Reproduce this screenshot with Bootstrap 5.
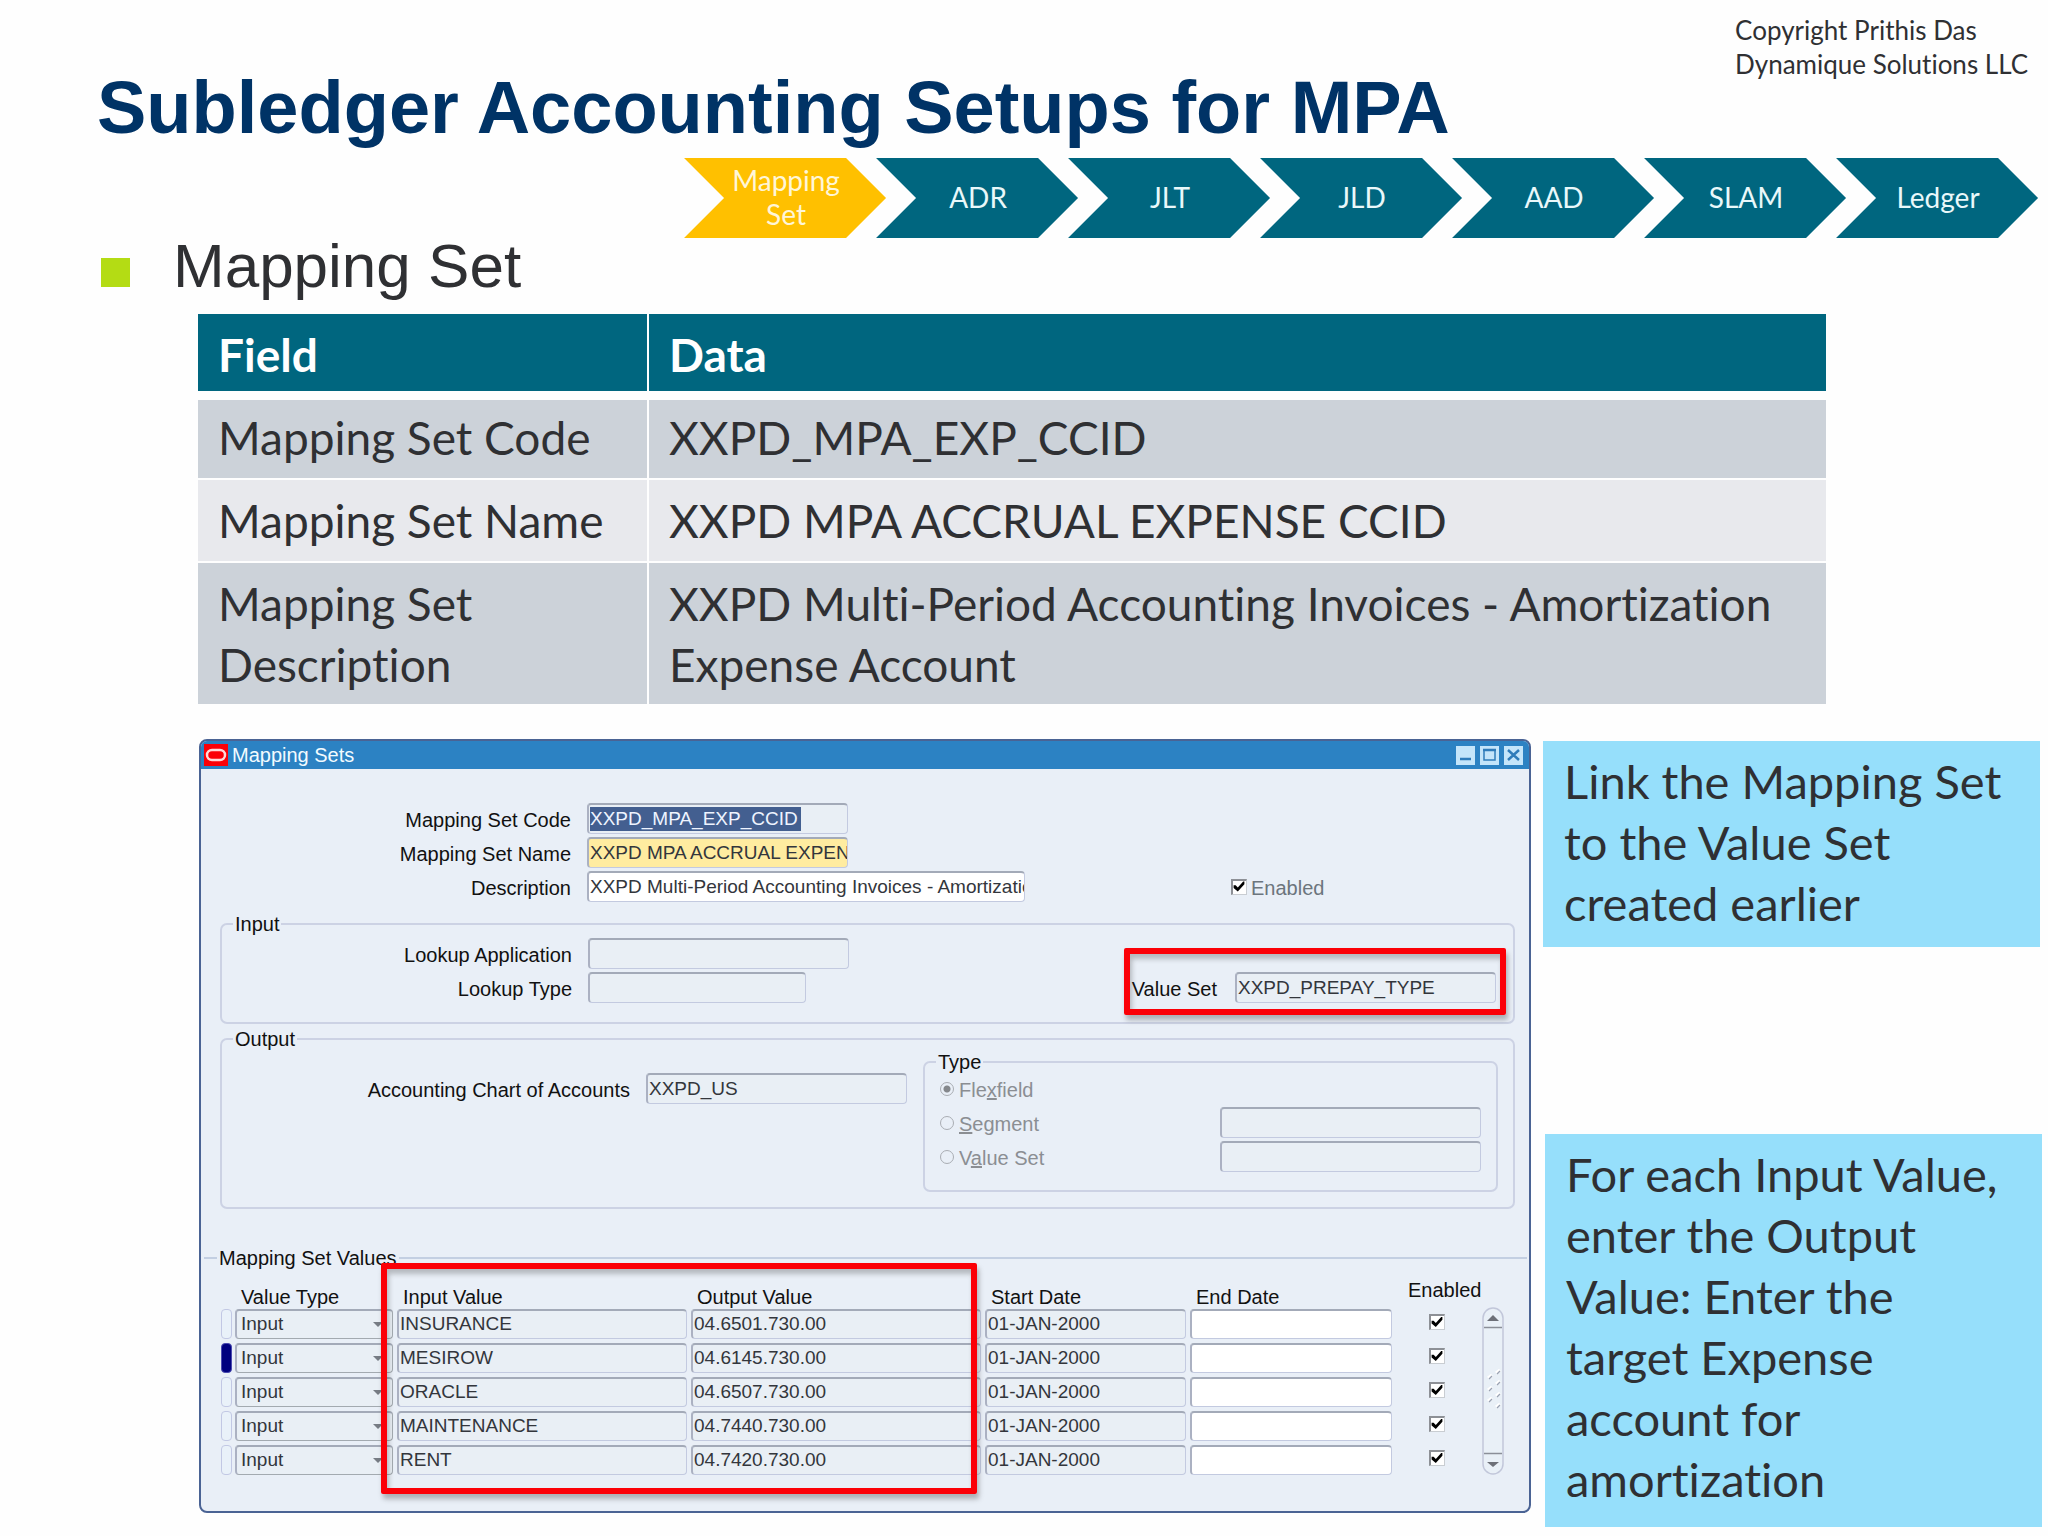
<!DOCTYPE html>
<html lang="en">
<head>
<meta charset="utf-8">
<meta name="viewport" content="width=device-width, initial-scale=1">
<title>Subledger Accounting Setups for MPA</title>
<link href="https://cdn.jsdelivr.net/npm/bootstrap@5.3.0/dist/css/bootstrap.min.css" rel="stylesheet">
<style>
  :root { --teal: #00667f; --ink: #2f3033; --pane: #e9eff7; }
  body { font-family: Lato, "Open Sans", sans-serif; font-variant-ligatures: none; color: var(--ink); background: #fefefe; }

  .slide-head { padding: 13px 20px 0 97px; }
  .slide-title { font: 700 74px/80px "Liberation Sans", Arial, sans-serif; color: #003366; margin: 55px 0 10px; }
  .credit { font-size: 26px; line-height: 34px; }

  .steps { width: 66.6%; padding-right: 20px; }
  .step { flex: 1 1 0; height: 80px; margin-right: -10px; padding: 0 0 2px 2px; background: var(--teal); color: #e9f8fa; font-size: 28px; line-height: 34px;
    clip-path: polygon(0 0, calc(100% - 40px) 0, 100% 50%, calc(100% - 40px) 100%, 0 100%, 40px 50%); }
  .step.current { background: #ffc000; color: #fff6d8; }

  .topic { font: 400 62px/56px "Liberation Sans", Arial, sans-serif; margin: 0 0 20px; padding-left: 101px; }
  .topic::before { content: ""; width: 29px; height: 29px; margin: 12px 43px 0 0; background: #b4dc14; }

  .spec-wrap { margin: 0 222px 35px 198px; }
  .spec { font-size: 46px; line-height: 61px; border-collapse: separate; border-spacing: 0; table-layout: fixed; margin: 0; color: var(--ink); }
  .spec th, .spec td { padding: 10px 20px; border: 0 solid #fefefe; border-bottom-width: 2px; text-align: left; }
  .spec th:first-child, .spec td:first-child { width: 451px; border-right-width: 2px; }
  .spec thead th { background: var(--teal); color: #fff; padding-bottom: 6px; border-bottom-width: 9px; }
  .spec tbody tr:first-child > * { padding-top: 7px; }
  .spec tbody tr > * { background: #ccd2d9; font-weight: 400; }
  .spec tbody tr:nth-child(2) > * { background: #e8e9ed; }
  .spec tbody tr:last-child > * { border-bottom-width: 0; padding-bottom: 9px; }

  .stage { padding: 0 6px 0 199px; gap: 12px; }
  .side { width: 499px; padding-top: 2px; }
  .note { background: #96dffb; font-size: 47px; line-height: 61px; padding: 10px 32px 13px 21px; margin: 0 2px 0 0; }
  .note + .note { margin: 187px 0 0 2px; padding-bottom: 17px; }

  .win { border: 2px solid #4a6394; border-radius: 8px; background: var(--pane); font: 400 20px/22px "Liberation Sans", Arial, sans-serif; color: #111; overflow: hidden; }
  .win-bar { background: #2c82c3; color: #f2fbff; height: 28px; padding: 0 6px 0 3px; }
  .win-bar button { width: 19px; height: 19px; padding: 0; border: 0; margin-left: 5px; background: #c4e5fa; display: flex; }
  .win-body { padding: 34px 0 32px; }

  .line { display: flex; align-items: center; height: 31px; margin-bottom: 3px; }
  .line > label:first-child { flex: none; text-align: right; margin-right: 16px; }
  .main-form .line > label:first-child { width: 370px; }
  .in-form .line > label:first-child { width: 350px; }
  .out-form .chart > label:first-child { width: 408px; }
  .line label { padding-top: 3px; }

  .fld { height: 31px; border: 1px solid #c3cae0; border-top: 2px solid #a3aab8; border-left: 2px solid #abb1c2; border-radius: 4px; background: #e9eff5; color: #33363c; padding: 0 0 0 1px; font-size: 19px; line-height: 22px; font-family: inherit; display: block; }
  .w-code { width: 261px; } .w-desc { width: 438px; } .w-type { width: 218px; }
  .fld.white { background: #fff; } .fld.need { background: #ffeca0; }
  .pick { padding: 2px 1px; }
  .pick input { width: 211px; height: 24px; border: 0; padding: 0; background: #435f90; color: #eef4ff; font: inherit; display: block; }
  .flag { width: 298px; }

  .grp { border: 2px solid #ccd2e4; border-radius: 7px; margin: 0 14px 4px 19px; padding: 3px 17px 16px 0; min-width: 0; }
  .grp > legend { float: none; width: auto; font-size: 20px; line-height: 22px; margin: 0 0 0 11px; padding: 0 2px; }
  .in-form { margin-top: 11px; }
  .out-form { padding: 1px 15px 15px 0; margin-bottom: 38px; }
  .chart { margin: 22px 0 0; }
  .kind { width: 575px; margin: 0; padding: 0 15px 15px 11px; color: #8b8e93; }
  .kind > legend { color: #111; margin-left: 0; }
  .rad { appearance: none; width: 14px; height: 14px; margin: 0 5px 0 4px; border: 1px solid #a9adb3; border-radius: 50%; }
  .rad:checked { background: radial-gradient(circle, #85888c 0 3px, transparent 4px); }

  .tick { appearance: none; display: block; width: 16px; height: 16px; margin: 0; background: #fff; border: 1px solid #c9cdd2; border-top: 2px solid #8d9096; border-left: 2px solid #8d9096; }
  .tick:checked::before { content: ""; display: block; width: 12px; height: 12px; background: #000; clip-path: polygon(5% 40%, 22% 40%, 40% 58%, 85% 8%, 95% 8%, 95% 32%, 40% 92%, 5% 62%); }

  .vals { border: 0; border-top: 2px solid #c3cfe2; margin: 0 2px 0 3px; padding: 0 23px 0 17px; min-width: 0; }
  .vals > legend { float: none; width: auto; font-size: 20px; line-height: 22px; margin: 0 0 0 -4px; padding: 0 2px; }
  .vgrid { table-layout: fixed; width: 100%; border-collapse: separate; border-spacing: 0; }
  .vgrid th { height: 40px; font-weight: 400; padding: 0 0 1px 6px; vertical-align: bottom; }
  .vgrid th.en { padding: 0 0 8px 12px; }
  .vgrid td { height: 34px; padding: 0 4px 4px 0; position: relative; vertical-align: top; }
  .vgrid .fld { width: 100%; height: 30px; padding-bottom: 1px; }
  .vgrid select.fld { appearance: none; padding-left: 4px; border-bottom-color: #a3aab0; border-right-color: #a3aab0; opacity: 1; }
  .drop::after { content: ""; position: absolute; right: 14px; top: 13px; border: 5px solid transparent; border-top-color: #777c84; border-bottom: 0; }
  .vgrid .tick { margin: 5px auto 0; }
  .grip { height: 30px; width: 11px; border: 1px solid #c2c8e4; border-radius: 4px; background: #e9f1f9; }
  .grip.on { background: #00007f; border-color: #4a4ab0; }
  .scroll { flex: none; width: 22px; height: 168px; margin-top: 38px; }

  .redbox { position: absolute; border: 6px solid #fb0007; border-radius: 2px; box-shadow: 2px 5px 5px rgba(60,60,60,.35), inset 2px 5px 5px rgba(60,60,60,.3); pointer-events: none; }
  .vset .redbox { inset: -24px -10px -12px -8px; }
  .vset label { margin-right: 18px; }
  .vals .redbox { left: 160px; top: -6px; width: 596px; height: 231px; }
</style>
<script src="https://cdn.jsdelivr.net/npm/bootstrap@5.3.0/dist/js/bootstrap.bundle.min.js"></script>
</head>
<body>
<header class="slide-head d-flex justify-content-between align-items-start">
  <h1 class="slide-title">Subledger Accounting Setups for MPA</h1>
  <div class="credit text-nowrap">Copyright Prithis Das<br>Dynamique Solutions LLC</div>
</header>

<nav class="d-flex justify-content-end" aria-label="Setup steps">
  <ol class="steps list-unstyled d-flex mb-0">
    <li class="step current d-flex align-items-center justify-content-center text-center">Mapping<br>Set</li>
    <li class="step d-flex align-items-center justify-content-center">ADR</li>
    <li class="step d-flex align-items-center justify-content-center">JLT</li>
    <li class="step d-flex align-items-center justify-content-center">JLD</li>
    <li class="step d-flex align-items-center justify-content-center">AAD</li>
    <li class="step d-flex align-items-center justify-content-center">SLAM</li>
    <li class="step d-flex align-items-center justify-content-center">Ledger</li>
  </ol>
</nav>

<main>
  <h2 class="topic d-flex align-items-center">Mapping Set</h2>

  <div class="spec-wrap">
    <table class="spec w-100">
      <thead><tr><th scope="col">Field</th><th scope="col">Data</th></tr></thead>
      <tbody>
        <tr><th scope="row">Mapping Set Code</th><td>XXPD_MPA_EXP_CCID</td></tr>
        <tr><th scope="row">Mapping Set Name</th><td>XXPD MPA ACCRUAL EXPENSE CCID</td></tr>
        <tr><th scope="row" class="align-top">Mapping Set Description</th><td>XXPD Multi-Period Accounting Invoices - Amortization Expense Account</td></tr>
      </tbody>
    </table>
  </div>

  <div class="stage d-flex align-items-start">
    <section class="win flex-grow-1" aria-label="Mapping Sets">
      <div class="win-bar d-flex align-items-center">
        <svg width="24" height="22" viewBox="0 0 24 22" aria-hidden="true"><rect width="24" height="22" fill="#fb0007"/><rect x="3" y="6" width="18" height="10" rx="5" fill="none" stroke="#ffd9d9" stroke-width="2.5"/></svg>
        <span class="ms-1 me-auto">Mapping Sets</span>
        <button type="button" aria-label="Minimize"><svg width="19" height="19" viewBox="0 0 19 19"><path d="M4 13h11" stroke="#2f7cba" stroke-width="2.5"/></svg></button>
        <button type="button" aria-label="Maximize"><svg width="19" height="19" viewBox="0 0 19 19"><rect x="4" y="4" width="11" height="10" fill="none" stroke="#2f7cba" stroke-width="1.5"/><path d="M3 4h13" stroke="#2f7cba" stroke-width="2.5"/></svg></button>
        <button type="button" aria-label="Close"><svg width="19" height="19" viewBox="0 0 19 19"><path d="M4 4l11 10M15 4L4 14" stroke="#2f7cba" stroke-width="2.5"/></svg></button>
      </div>

      <form class="win-body">
        <div class="main-form">
          <div class="line"><label for="code">Mapping Set Code</label><div class="fld w-code pick"><input id="code" type="text" value="XXPD_MPA_EXP_CCID" readonly></div></div>
          <div class="line"><label for="name">Mapping Set Name</label><input id="name" class="fld w-code need" type="text" value="XXPD MPA ACCRUAL EXPENSE CCID"></div>
          <div class="line"><label for="desc">Description</label><input id="desc" class="fld white w-desc" type="text" value="XXPD Multi-Period Accounting Invoices - Amortization Expense Account">
            <div class="flag d-flex align-items-center ms-auto"><input id="enabled" class="tick" type="checkbox" checked><label for="enabled" class="ms-1 text-secondary-emphasis">Enabled</label></div>
          </div>
        </div>

        <fieldset class="grp in-form">
          <legend>Input</legend>
          <div class="line"><label for="lapp">Lookup Application</label><input id="lapp" class="fld w-code" type="text"></div>
          <div class="line"><label for="ltype">Lookup Type</label><input id="ltype" class="fld w-type" type="text">
            <div class="vset position-relative d-flex align-items-center ms-auto"><label for="vset">Value Set</label><input id="vset" class="fld w-code" type="text" value="XXPD_PREPAY_TYPE"><span class="redbox"></span></div>
          </div>
        </fieldset>

        <fieldset class="grp out-form">
          <legend>Output</legend>
          <div class="d-flex justify-content-between align-items-start">
            <div class="line chart"><label for="coa">Accounting Chart of Accounts</label><input id="coa" class="fld w-code" type="text" value="XXPD_US"></div>
            <fieldset class="grp kind">
              <legend>Type</legend>
              <div class="line"><input class="rad" type="radio" name="kind" id="k1" checked><label for="k1">Fle<u>x</u>field</label></div>
              <div class="line"><input class="rad" type="radio" name="kind" id="k2"><label for="k2"><u>S</u>egment</label><input class="fld w-code ms-auto" type="text" aria-label="Segment"></div>
              <div class="line"><input class="rad" type="radio" name="kind" id="k3"><label for="k3">V<u>a</u>lue Set</label><input class="fld w-code ms-auto" type="text" aria-label="Value Set"></div>
            </fieldset>
          </div>
        </fieldset>

        <fieldset class="vals">
          <legend>Mapping Set Values</legend>
          <div class="d-flex align-items-start position-relative">
            <table class="vgrid">
              <colgroup><col style="width:14px"><col style="width:162px"><col style="width:294px"><col style="width:294px"><col style="width:205px"><col><col style="width:86px"></colgroup>
              <thead><tr><th></th><th scope="col">Value Type</th><th scope="col">Input Value</th><th scope="col">Output Value</th><th scope="col">Start Date</th><th scope="col">End Date</th><th scope="col" class="en">Enabled</th></tr></thead>
              <tbody>
                <tr><td><div class="grip"></div></td><td class="drop"><select class="fld" aria-label="Value Type"><option>Input</option></select></td><td><input class="fld" aria-label="Input Value" value="INSURANCE"></td><td><input class="fld" aria-label="Output Value" value="04.6501.730.00"></td><td><input class="fld" aria-label="Start Date" value="01-JAN-2000"></td><td><input class="fld white" aria-label="End Date"></td><td><input type="checkbox" class="tick" aria-label="Enabled" checked></td></tr>
                <tr><td><div class="grip on"></div></td><td class="drop"><select class="fld" aria-label="Value Type"><option>Input</option></select></td><td><input class="fld" aria-label="Input Value" value="MESIROW"></td><td><input class="fld" aria-label="Output Value" value="04.6145.730.00"></td><td><input class="fld" aria-label="Start Date" value="01-JAN-2000"></td><td><input class="fld white" aria-label="End Date"></td><td><input type="checkbox" class="tick" aria-label="Enabled" checked></td></tr>
                <tr><td><div class="grip"></div></td><td class="drop"><select class="fld" aria-label="Value Type"><option>Input</option></select></td><td><input class="fld" aria-label="Input Value" value="ORACLE"></td><td><input class="fld" aria-label="Output Value" value="04.6507.730.00"></td><td><input class="fld" aria-label="Start Date" value="01-JAN-2000"></td><td><input class="fld white" aria-label="End Date"></td><td><input type="checkbox" class="tick" aria-label="Enabled" checked></td></tr>
                <tr><td><div class="grip"></div></td><td class="drop"><select class="fld" aria-label="Value Type"><option>Input</option></select></td><td><input class="fld" aria-label="Input Value" value="MAINTENANCE"></td><td><input class="fld" aria-label="Output Value" value="04.7440.730.00"></td><td><input class="fld" aria-label="Start Date" value="01-JAN-2000"></td><td><input class="fld white" aria-label="End Date"></td><td><input type="checkbox" class="tick" aria-label="Enabled" checked></td></tr>
                <tr><td><div class="grip"></div></td><td class="drop"><select class="fld" aria-label="Value Type"><option>Input</option></select></td><td><input class="fld" aria-label="Input Value" value="RENT"></td><td><input class="fld" aria-label="Output Value" value="04.7420.730.00"></td><td><input class="fld" aria-label="Start Date" value="01-JAN-2000"></td><td><input class="fld white" aria-label="End Date"></td><td><input type="checkbox" class="tick" aria-label="Enabled" checked></td></tr>
              </tbody>
            </table>
            <svg class="scroll" viewBox="0 0 22 168" aria-hidden="true">
              <rect x="1" y="1" width="20" height="166" rx="10" fill="#e9f0f7" stroke="#c2c7da" stroke-width="1.5"/>
              <path d="M11 8l6 6H5z" fill="#6d7078"/><path d="M11 160l6-5H5z" fill="#6d7078"/>
              <path d="M2 20.500h18M2 146.500h18" stroke="#8b8f98" stroke-width="1.5"/>
              <g stroke="#fff" stroke-width="3"><path d="M14 66l4-3M6 71l4-3M14 77l4-3M6 83l4-3M14 89l4-3M6 94l4-3M14 100l4-3"/></g>
              <g stroke="#9aa2b2" stroke-width="1.300"><path d="M15 67l3-3M7 72l3-3M15 78l3-3M7 84l3-3M15 90l3-3M7 95l3-3M15 101l3-3"/></g>
            </svg>
            <span class="redbox"></span>
          </div>
        </fieldset>
      </form>
    </section>

    <aside class="side flex-shrink-0">
      <p class="note">Link the Mapping Set to the Value Set created earlier</p>
      <p class="note">For each Input Value, enter the Output Value: Enter the target Expense account for amortization</p>
    </aside>
  </div>
</main>
</body>
</html>
